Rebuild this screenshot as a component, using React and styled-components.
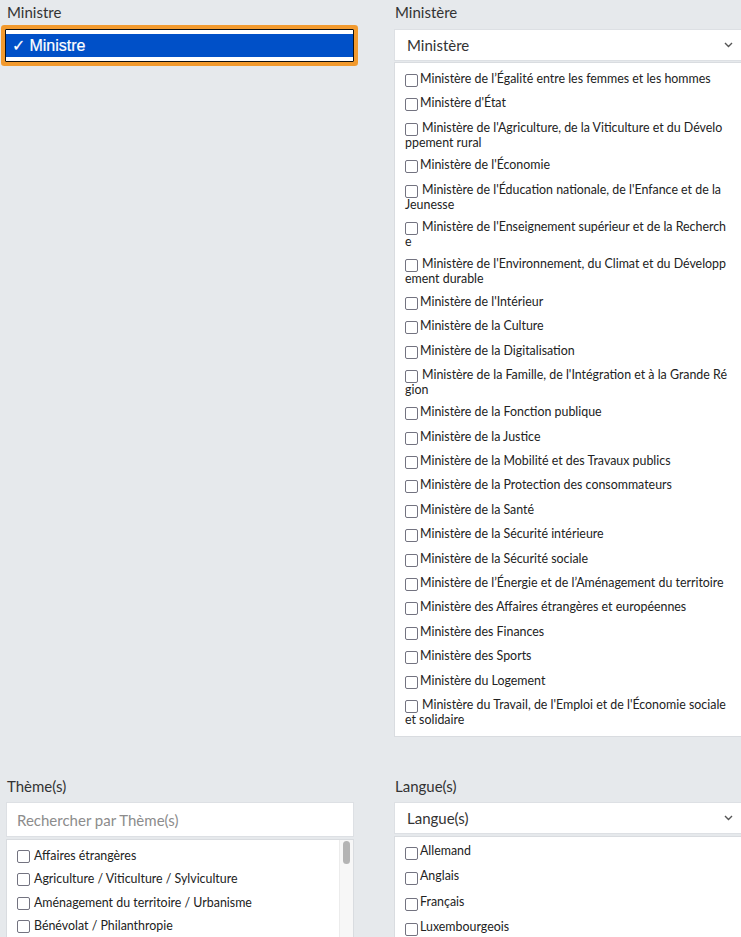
import React from "react";
import styled, { createGlobalStyle } from "styled-components";

const GlobalStyle = createGlobalStyle`
  html, body {
    margin: 0;
    background: #e6e9ec;
    overflow: hidden;
  }
  body {
    font-family: "Lato", "Liberation Sans", sans-serif;
    color: #222;
  }
`;

const Page = styled.div`
  display: grid;
  grid-template-columns: 348px 348px;
  column-gap: 40px;
  row-gap: 39px;
  padding: 2px 0 0 6px;
  width: 742px;
  align-items: start;
`;

const Field = styled.div`
  display: flex;
  flex-direction: column;
`;

const Label = styled.div`
  font-size: 15px;
  line-height: 20px;
  color: #333;
  margin-bottom: ${(p) => (p.tight ? 6 : 7)}px;
  padding-left: 1px;
`;

const FocusedSelect = styled.div`
  height: 33px;
  margin: 1px 0 0 -1px;
  width: 349px;
  border: 1px solid #111;
  background: #fff;
  padding: 4px 0;
  box-sizing: border-box;
  box-shadow: 0 0 0 4px #f29a2e;
  border-radius: 1px;
`;

const SelectedOption = styled.div`
  height: 23px;
  background: #0050c8;
  color: #fff;
  font-family: "Liberation Sans", Arial, sans-serif;
  font-size: 16px;
  line-height: 23px;
  padding-left: 6px;
  -webkit-text-stroke: 0.2px #fff;
`;

const Select = styled.div`
  display: flex;
  align-items: center;
  justify-content: space-between;
  height: 32px;
  box-sizing: border-box;
  background: #fff;
  border: 1px solid #dde0e4;
  padding: 0 8px 0 12px;
  font-size: 15px;
  color: #333;
`;

const SearchInput = styled.div`
  height: 35px;
  box-sizing: border-box;
  background: #fff;
  border: 1px solid #dde0e4;
  padding: 0 10px;
  display: flex;
  align-items: center;
  font-size: 15px;
  color: #8c8c8c;
`;

const List = styled.div`
  margin-top: ${(p) => p.gap || 1}px;
  background: #fff;
  border: 1px solid #d9dce0;
  height: ${(p) => (p.height ? `${p.height}px` : "auto")};
  box-sizing: border-box;
  display: flex;
  overflow: hidden;
`;

const Items = styled.div`
  flex: 1;
  padding: ${(p) => p.top}px 14px 6px 10px;
`;

const Item = styled.label`
  display: block;
  font-size: 12.4px;
  line-height: 13px;
  margin-bottom: 9.4px;
  word-break: break-all;
  color: #222;
`;

const Box = styled.span`
  display: inline-block;
  width: 13px;
  height: 13px;
  box-sizing: border-box;
  border: 1.5px solid #737380;
  border-radius: 2px;
  vertical-align: ${(p) => p.drop || -4}px;
  margin-right: ${(p) => (p.spaced ? 4 : 2)}px;
  background: #fff;
`;

const Track = styled.div`
  width: 14px;
  border-left: 1px solid #ececec;
  background: #f7f7f7;
  padding: 1px 3px;
  box-sizing: border-box;
`;

const Thumb = styled.div`
  width: 7px;
  height: 23px;
  border-radius: 4px;
  background: #b4b4b4;
`;

const Chevron = () => (
  <svg width="9" height="6" viewBox="0 0 9 6">
    <path d="M1 1l3.5 3.5L8 1" fill="none" stroke="#555" strokeWidth="1.4" />
  </svg>
);

const ministeres = [
  ["Ministère de l’Égalité entre les femmes et les hommes"],
  ["Ministère d'État"],
  ["Ministère de l'Agriculture, de la Viticulture et du Développement rural", true],
  ["Ministère de l'Économie"],
  ["Ministère de l'Éducation nationale, de l'Enfance et de la Jeunesse", true],
  ["Ministère de l'Enseignement supérieur et de la Recherche", true],
  ["Ministère de l'Environnement, du Climat et du Développement durable", true],
  ["Ministère de l'Intérieur"],
  ["Ministère de la Culture"],
  ["Ministère de la Digitalisation"],
  ["Ministère de la Famille, de l'Intégration et à la Grande Région", true],
  ["Ministère de la Fonction publique"],
  ["Ministère de la Justice"],
  ["Ministère de la Mobilité et des Travaux publics"],
  ["Ministère de la Protection des consommateurs"],
  ["Ministère de la Santé"],
  ["Ministère de la Sécurité intérieure"],
  ["Ministère de la Sécurité sociale"],
  ["Ministère de l’Énergie et de l’Aménagement du territoire"],
  ["Ministère des Affaires étrangères et européennes"],
  ["Ministère des Finances"],
  ["Ministère des Sports"],
  ["Ministère du Logement"],
  ["Ministère du Travail, de l'Emploi et de l'Économie sociale et solidaire", true],
];

const themes = [
  "Affaires étrangères",
  "Agriculture / Viticulture / Sylviculture",
  "Aménagement du territoire / Urbanisme",
  "Bénévolat / Philanthropie",
  "Commerce",
  "Communication",
];

const langues = ["Allemand", "Anglais", "Français", "Luxembourgeois", "Portugais"];

function App() {
  return (
    <Page>
      <GlobalStyle />
      <Field>
        <Label tight>Ministre</Label>
        <FocusedSelect>
          <SelectedOption>✓ Ministre</SelectedOption>
        </FocusedSelect>
      </Field>

      <Field>
        <Label>Ministère</Label>
        <Select>
          Ministère
          <Chevron />
        </Select>
        <List height={675}>
          <Items top={9}>
            {ministeres.map(([name, spaced]) => (
              <Item key={name}>
                <Box spaced={spaced} />
                {name}
              </Item>
            ))}
          </Items>
        </List>
      </Field>

      <Field>
        <Label tight>Thème(s)</Label>
        <SearchInput>Rechercher par Thème(s)</SearchInput>
        <List gap={2} height={140}>
          <Items top={9}>
            {themes.map((t) => (
              <Item key={t}>
                <Box drop={-3} spaced />
                {t}
              </Item>
            ))}
          </Items>
          <Track>
            <Thumb />
          </Track>
        </List>
      </Field>

      <Field>
        <Label tight>Langue(s)</Label>
        <Select>
          Langue(s)
          <Chevron />
        </Select>
        <List gap={2} height={140}>
          <Items top={7}>
            {langues.map((l) => (
              <Item key={l}>
                <Box drop={-5} />
                {l}
              </Item>
            ))}
          </Items>
        </List>
      </Field>
    </Page>
  );
}

export default App;
